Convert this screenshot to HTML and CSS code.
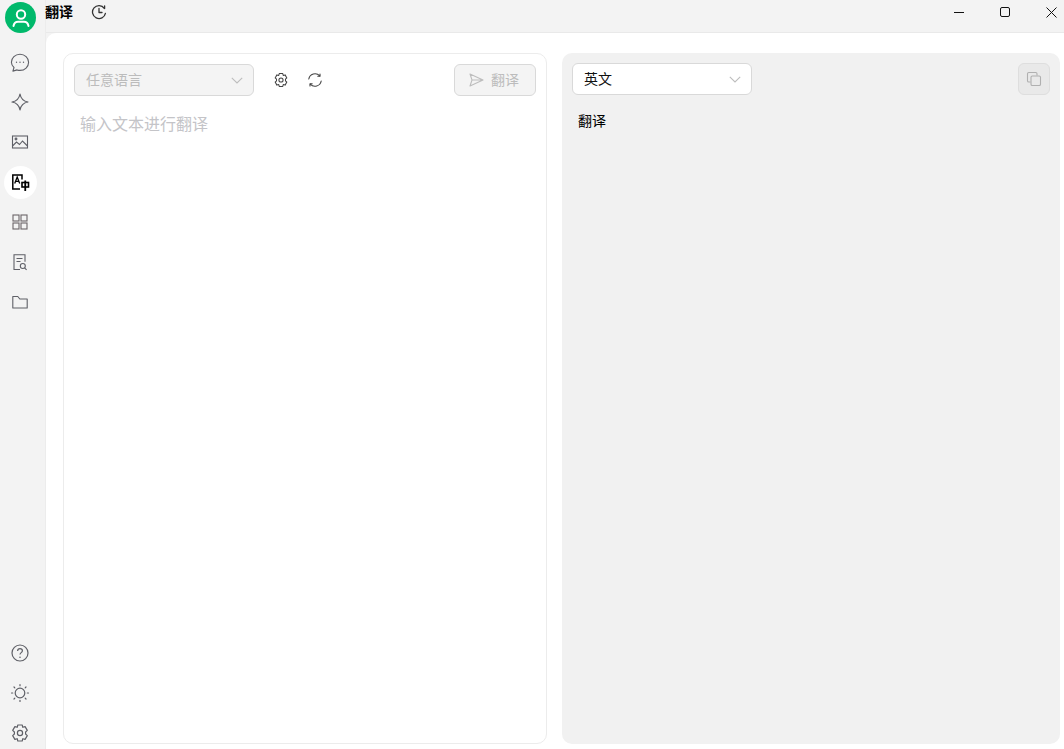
FILE: index.html
```html
<!DOCTYPE html>
<html lang="zh-CN">
<head>
    <meta charset="UTF-8">
    <title>翻译</title>
    <link rel="stylesheet" href="styles.css">
</head>
<body>
    <div class="app">
        <aside class="sidebar">
            <div class="avatar">
                <svg width="20" height="20" viewBox="0 0 20 20" fill="none" stroke="#fff" stroke-width="2" stroke-linecap="round">
                    <circle cx="10" cy="6.500" r="4.200"/>
                    <path d="M2.500 18c.6-3 2.400-4.300 4.500-4.300h6c2.100 0 3.900 1.300 4.500 4.300"/>
                </svg>
            </div>
            <nav class="nav">
                <div class="nav-item">
                    <svg width="20" height="20" viewBox="0 0 20 20" fill="none" stroke="#5f6067" stroke-width="1.100">
                        <path d="M4 15.500C2.300 14 1.400 12.200 1.400 10.300 1.400 5.800 5.200 2.200 10 2.200s8.600 3.600 8.600 8.100-3.800 8.100-8.600 8.100c-1 0-2-.2-2.900-.5l-4.200 1.200z" stroke-linejoin="round"/>
                        <circle cx="6.500" cy="10.300" r=".7" fill="#5f6067" stroke="none"/>
                        <circle cx="10" cy="10.300" r=".7" fill="#5f6067" stroke="none"/>
                        <circle cx="13.500" cy="10.300" r=".7" fill="#5f6067" stroke="none"/>
                    </svg>
                </div>
                <div class="nav-item">
                    <svg width="20" height="20" viewBox="0 0 20 20" fill="none" stroke="#5f6067" stroke-width="1.200" stroke-linejoin="round">
                        <path d="M10 2c.8 4.600 3.200 7.200 8 8-4.800.8-7.200 3.400-8 8-.8-4.600-3.200-7.200-8-8 4.800-.8 7.200-3.400 8-8z"/>
                    </svg>
                </div>
                <div class="nav-item">
                    <svg width="18" height="18" viewBox="0 0 18 18" fill="none" stroke="#5f6067" stroke-width="1.100">
                        <rect x="1.500" y="3" width="15" height="12"/>
                        <path d="M1.500 13l4-4 3 2.500 3-3.500 5 5"/>
                        <circle cx="5" cy="6" r=".9"/>
                    </svg>
                </div>
                <div class="nav-item nav-item-active">
                    <svg width="20" height="20" viewBox="0 0 20 20" fill="none" stroke="#000" stroke-width="1.500">
                        <path d="M10 17H2.800V3h9.200v4.500"/>
                        <path d="M4.700 11.500L7.200 5l2.500 6.500M5.600 9.300h3.200" stroke-width="1.300"/>
                        <rect x="12" y="10.500" width="6.500" height="4.500" stroke-width="1.600"/>
                        <path d="M15.250 8.500v10.500" stroke-width="1.800"/>
                    </svg>
                </div>
                <div class="nav-item">
                    <svg width="18" height="18" viewBox="0 0 18 18" fill="none" stroke="#6b6468" stroke-width="1.100">
                        <rect x="2" y="2" width="6" height="6"/>
                        <rect x="10" y="2" width="6" height="6"/>
                        <rect x="2" y="10" width="6" height="6"/>
                        <rect x="10" y="10" width="6" height="6"/>
                    </svg>
                </div>
                <div class="nav-item">
                    <svg width="18" height="18" viewBox="0 0 18 18" fill="none" stroke="#5f6067" stroke-width="1.100">
                        <path d="M9 16.500H3V1.800h11v7"/>
                        <path d="M5.500 5.500h6M5.500 8.500h4"/>
                        <circle cx="11.800" cy="13" r="2.500"/>
                        <path d="M13.600 14.800l2 2"/>
                    </svg>
                </div>
                <div class="nav-item">
                    <svg width="18" height="18" viewBox="0 0 18 18" fill="none" stroke="#5f6067" stroke-width="1.100">
                        <path d="M1.800 15V3.500h5l2 2.500h7.400v9z" stroke-linejoin="round"/>
                    </svg>
                </div>
            </nav>
            <div class="nav nav-bottom">
                <div class="nav-item">
                    <svg width="20" height="20" viewBox="0 0 20 20" fill="none" stroke="#5f6067" stroke-width="1.200">
                        <circle cx="10" cy="10" r="8"/>
                        <path d="M7.600 8c0-1.500 1.100-2.400 2.400-2.400s2.400.9 2.400 2.200c0 1.800-2.400 1.900-2.400 3.700"/>
                        <circle cx="10" cy="14.200" r=".8" fill="#5f6067" stroke="none"/>
                    </svg>
                </div>
                <div class="nav-item">
                    <svg width="20" height="20" viewBox="0 0 20 20" fill="none" stroke="#5f6067" stroke-width="1.200" stroke-linecap="round">
                        <circle cx="10" cy="10" r="4.800"/>
                        <path d="M10 1.500v1.200M10 17.300v1.200M1.500 10h1.200M17.300 10h1.200M4 4l.8.800M15.200 15.200l.8.800M4 16l.8-.8M15.200 4.800l.8-.8"/>
                    </svg>
                </div>
                <div class="nav-item">
                    <svg width="20" height="20" viewBox="0 0 20 20" fill="none" stroke="#5f6067" stroke-width="1.200" stroke-linejoin="round">
                        <path d="M7.800 2h4.400l.6 2.300 2.300-.7 2.200 3.800-1.700 1.600v2l1.700 1.600-2.200 3.800-2.300-.7-.6 2.300H7.800l-.6-2.300-2.300.7-2.200-3.800 1.700-1.600V9L2.700 7.400l2.200-3.800 2.300.7z"/>
                        <circle cx="10" cy="10" r="2.600"/>
                    </svg>
                </div>
            </div>
        </aside>

        <div class="main">
            <header class="titlebar">
                <div class="title-left">
                    <span class="title">翻译</span>
                    <svg width="16" height="16" viewBox="0 0 16 16" fill="none" stroke="#333" stroke-width="1.300" stroke-linecap="round" stroke-linejoin="round">
                        <path d="M14.400 9.300A6.500 6.500 0 1 1 13.300 4.300"/>
                        <path d="M8 4.500V8.500h3M13.600 1.800v2.800"/>
                    </svg>
                </div>
                <div class="window-controls">
                    <span class="win-btn"><span class="win-min"></span></span>
                    <span class="win-btn"><span class="win-max"></span></span>
                    <span class="win-btn">
                        <svg width="11" height="11" viewBox="0 0 11 11" stroke="#111" stroke-width="1"><path d="M.5.500l10 10M10.500.500l-10 10"/></svg>
                    </span>
                </div>
            </header>

            <main class="content">
                <section class="panel panel-input">
                    <div class="toolbar">
                        <div class="select select-disabled">
                            <span class="select-text">任意语言</span>
                            <svg width="12" height="7" viewBox="0 0 12 7" fill="none" stroke="#bdbdbd" stroke-width="1.100"><path d="M.8.800L6 6 11.200.800"/></svg>
                        </div>
                        <span class="tool-icon">
                            <svg width="16" height="16" viewBox="0 0 20 20" fill="none" stroke="#444" stroke-width="1.300" stroke-linejoin="round">
                                <path d="M7.800 2h4.400l.6 2.300 2.300-.7 2.200 3.800-1.700 1.600v2l1.700 1.600-2.200 3.800-2.300-.7-.6 2.300H7.800l-.6-2.300-2.300.7-2.200-3.800 1.700-1.600V9L2.700 7.400l2.200-3.800 2.300.7z"/>
                                <circle cx="10" cy="10" r="2.600"/>
                            </svg>
                        </span>
                        <span class="tool-icon tool-icon-refresh">
                            <svg width="16" height="16" viewBox="0 0 16 16" fill="none" stroke="#444" stroke-width="1.100" stroke-linecap="round" stroke-linejoin="round">
                                <path d="M1.800 7A6.300 6.300 0 0 1 12.700 3.900M14.200 9A6.300 6.300 0 0 1 3.300 12.100"/>
                                <path d="M13 2v2.200h-2.200M3 14v-2.200h2.200"/>
                            </svg>
                        </span>
                        <button class="translate-btn">
                            <svg width="15" height="14" viewBox="0 0 15 14" fill="none" stroke="#bdbdbd" stroke-width="1.100" stroke-linejoin="round">
                                <path d="M1 1l13 6-13 6 2-6zM3 7h11"/>
                            </svg>
                            <span class="select-text">翻译</span>
                        </button>
                    </div>
                    <div class="placeholder">输入文本进行翻译</div>
                </section>

                <section class="panel panel-output">
                    <div class="toolbar">
                        <div class="select">
                            <span class="select-text">英文</span>
                            <svg width="12" height="7" viewBox="0 0 12 7" fill="none" stroke="#bdbdbd" stroke-width="1.100"><path d="M.8.800L6 6 11.200.800"/></svg>
                        </div>
                        <button class="copy-btn">
                            <svg width="16" height="16" viewBox="0 0 16 16" fill="none" stroke="#b0b0b0" stroke-width="1.100">
                                <path d="M4.500 11H2.800A1.300 1.300 0 0 1 1.500 9.700V2.800A1.300 1.300 0 0 1 2.800 1.500h6.900a1.300 1.300 0 0 1 1.300 1.300v1.700"/>
                                <rect x="5" y="5" width="9.500" height="9.500" rx="1.300"/>
                            </svg>
                        </button>
                    </div>
                    <div class="result">翻译</div>
                </section>
            </main>
        </div>
    </div>
</body>
</html>
```

FILE: styles.css
```css
html, body {
    height: 100%;
    margin: 0;
    padding: 0;
    overflow: hidden;
}

body {
    font-family: "Noto Sans CJK SC", "Liberation Sans", sans-serif;
    font-size: 14px;
    color: #111;
    background-color: #f3f3f3;
}

.app {
    display: flex;
    height: 749px;
}

.sidebar {
    width: 46px;
    flex-shrink: 0;
    display: flex;
    flex-direction: column;
    align-items: flex-start;
    padding: 2px 0 0 4px;
    box-sizing: border-box;
    border-right: 1px solid #ececec;
}

.avatar {
    width: 31px;
    height: 31px;
    margin-left: 1px;
    border-radius: 50%;
    background-color: #00b96b;
    display: flex;
    align-items: center;
    justify-content: center;
}

.nav {
    display: flex;
    flex-direction: column;
    gap: 7px;
    margin-top: 13px;
}

.nav-bottom {
    margin-top: auto;
    margin-bottom: -1px;
}

.nav-item {
    width: 33px;
    height: 33px;
    box-sizing: border-box;
    padding: 0 1px 1px 0;
    display: flex;
    align-items: center;
    justify-content: center;
    border-radius: 50%;
}

.nav-item-active {
    background-color: #fff;
}

.main {
    flex: 1;
    min-width: 0;
    display: flex;
    flex-direction: column;
}

.titlebar {
    height: 32px;
    flex-shrink: 0;
    display: flex;
    justify-content: space-between;
    border-bottom: 1px solid #e9e9e9;
}

.title-left {
    display: flex;
    align-items: center;
    gap: 18px;
    height: 24px;
    margin-left: -1px;
}

.title {
    font-size: 14px;
    font-weight: 700;
    color: #000;
    padding-bottom: 2px;
}

.window-controls {
    display: flex;
    height: 24px;
    margin-right: -10px;
}

.win-btn {
    width: 46px;
    display: flex;
    align-items: center;
    justify-content: center;
}

.win-min {
    width: 10px;
    border-top: 1px solid #111;
}

.win-max {
    width: 8px;
    height: 8px;
    border: 1px solid #111;
    border-radius: 2px;
}

.content {
    flex: 1;
    min-height: 0;
    display: flex;
    gap: 15px;
    padding: 20px 4px 5px 17px;
    background-color: #fff;
    border-top-left-radius: 10px;
}

.panel {
    flex: 1;
    min-width: 0;
    box-sizing: border-box;
    border-radius: 10px;
}

.panel-input {
    flex: 0 0 484px;
    padding: 10px;
    border: 1px solid #ececec;
}

.panel-output {
    padding: 10px;
    background-color: #f1f1f1;
}

.toolbar {
    display: flex;
    align-items: center;
}

.select {
    width: 180px;
    height: 32px;
    box-sizing: border-box;
    display: flex;
    align-items: center;
    justify-content: space-between;
    padding: 0 10px 0 11px;
    background-color: #fff;
    border: 1px solid #d9d9d9;
    border-radius: 6px;
    font-size: 14px;
    color: #111;
}

.select-text {
    padding-bottom: 2px;
}

.select-disabled {
    background-color: #f4f4f4;
    color: #bcbcbc;
}

.tool-icon {
    width: 16px;
    height: 16px;
    margin-left: 19px;
    display: flex;
}

.tool-icon-refresh {
    margin-left: 18px;
}

.translate-btn {
    margin-left: auto;
    width: 82px;
    height: 32px;
    display: flex;
    align-items: center;
    justify-content: center;
    gap: 7px;
    padding: 0 2px 0 0;
    font: inherit;
    font-size: 14px;
    color: #bcbcbc;
    background-color: #f4f4f4;
    border: 1px solid #d9d9d9;
    border-radius: 6px;
}

.copy-btn {
    margin-left: auto;
    width: 32px;
    height: 32px;
    display: flex;
    align-items: center;
    justify-content: center;
    padding: 0;
    background-color: #e9e9e9;
    border: 1px solid #dedede;
    border-radius: 6px;
}

.placeholder {
    margin: 15px 0 0 6px;
    font-size: 16px;
    line-height: 24px;
    color: #c4c4c8;
}

.result {
    margin: 14px 0 0 6px;
    font-size: 14px;
    line-height: 22px;
    color: #000;
}
```
